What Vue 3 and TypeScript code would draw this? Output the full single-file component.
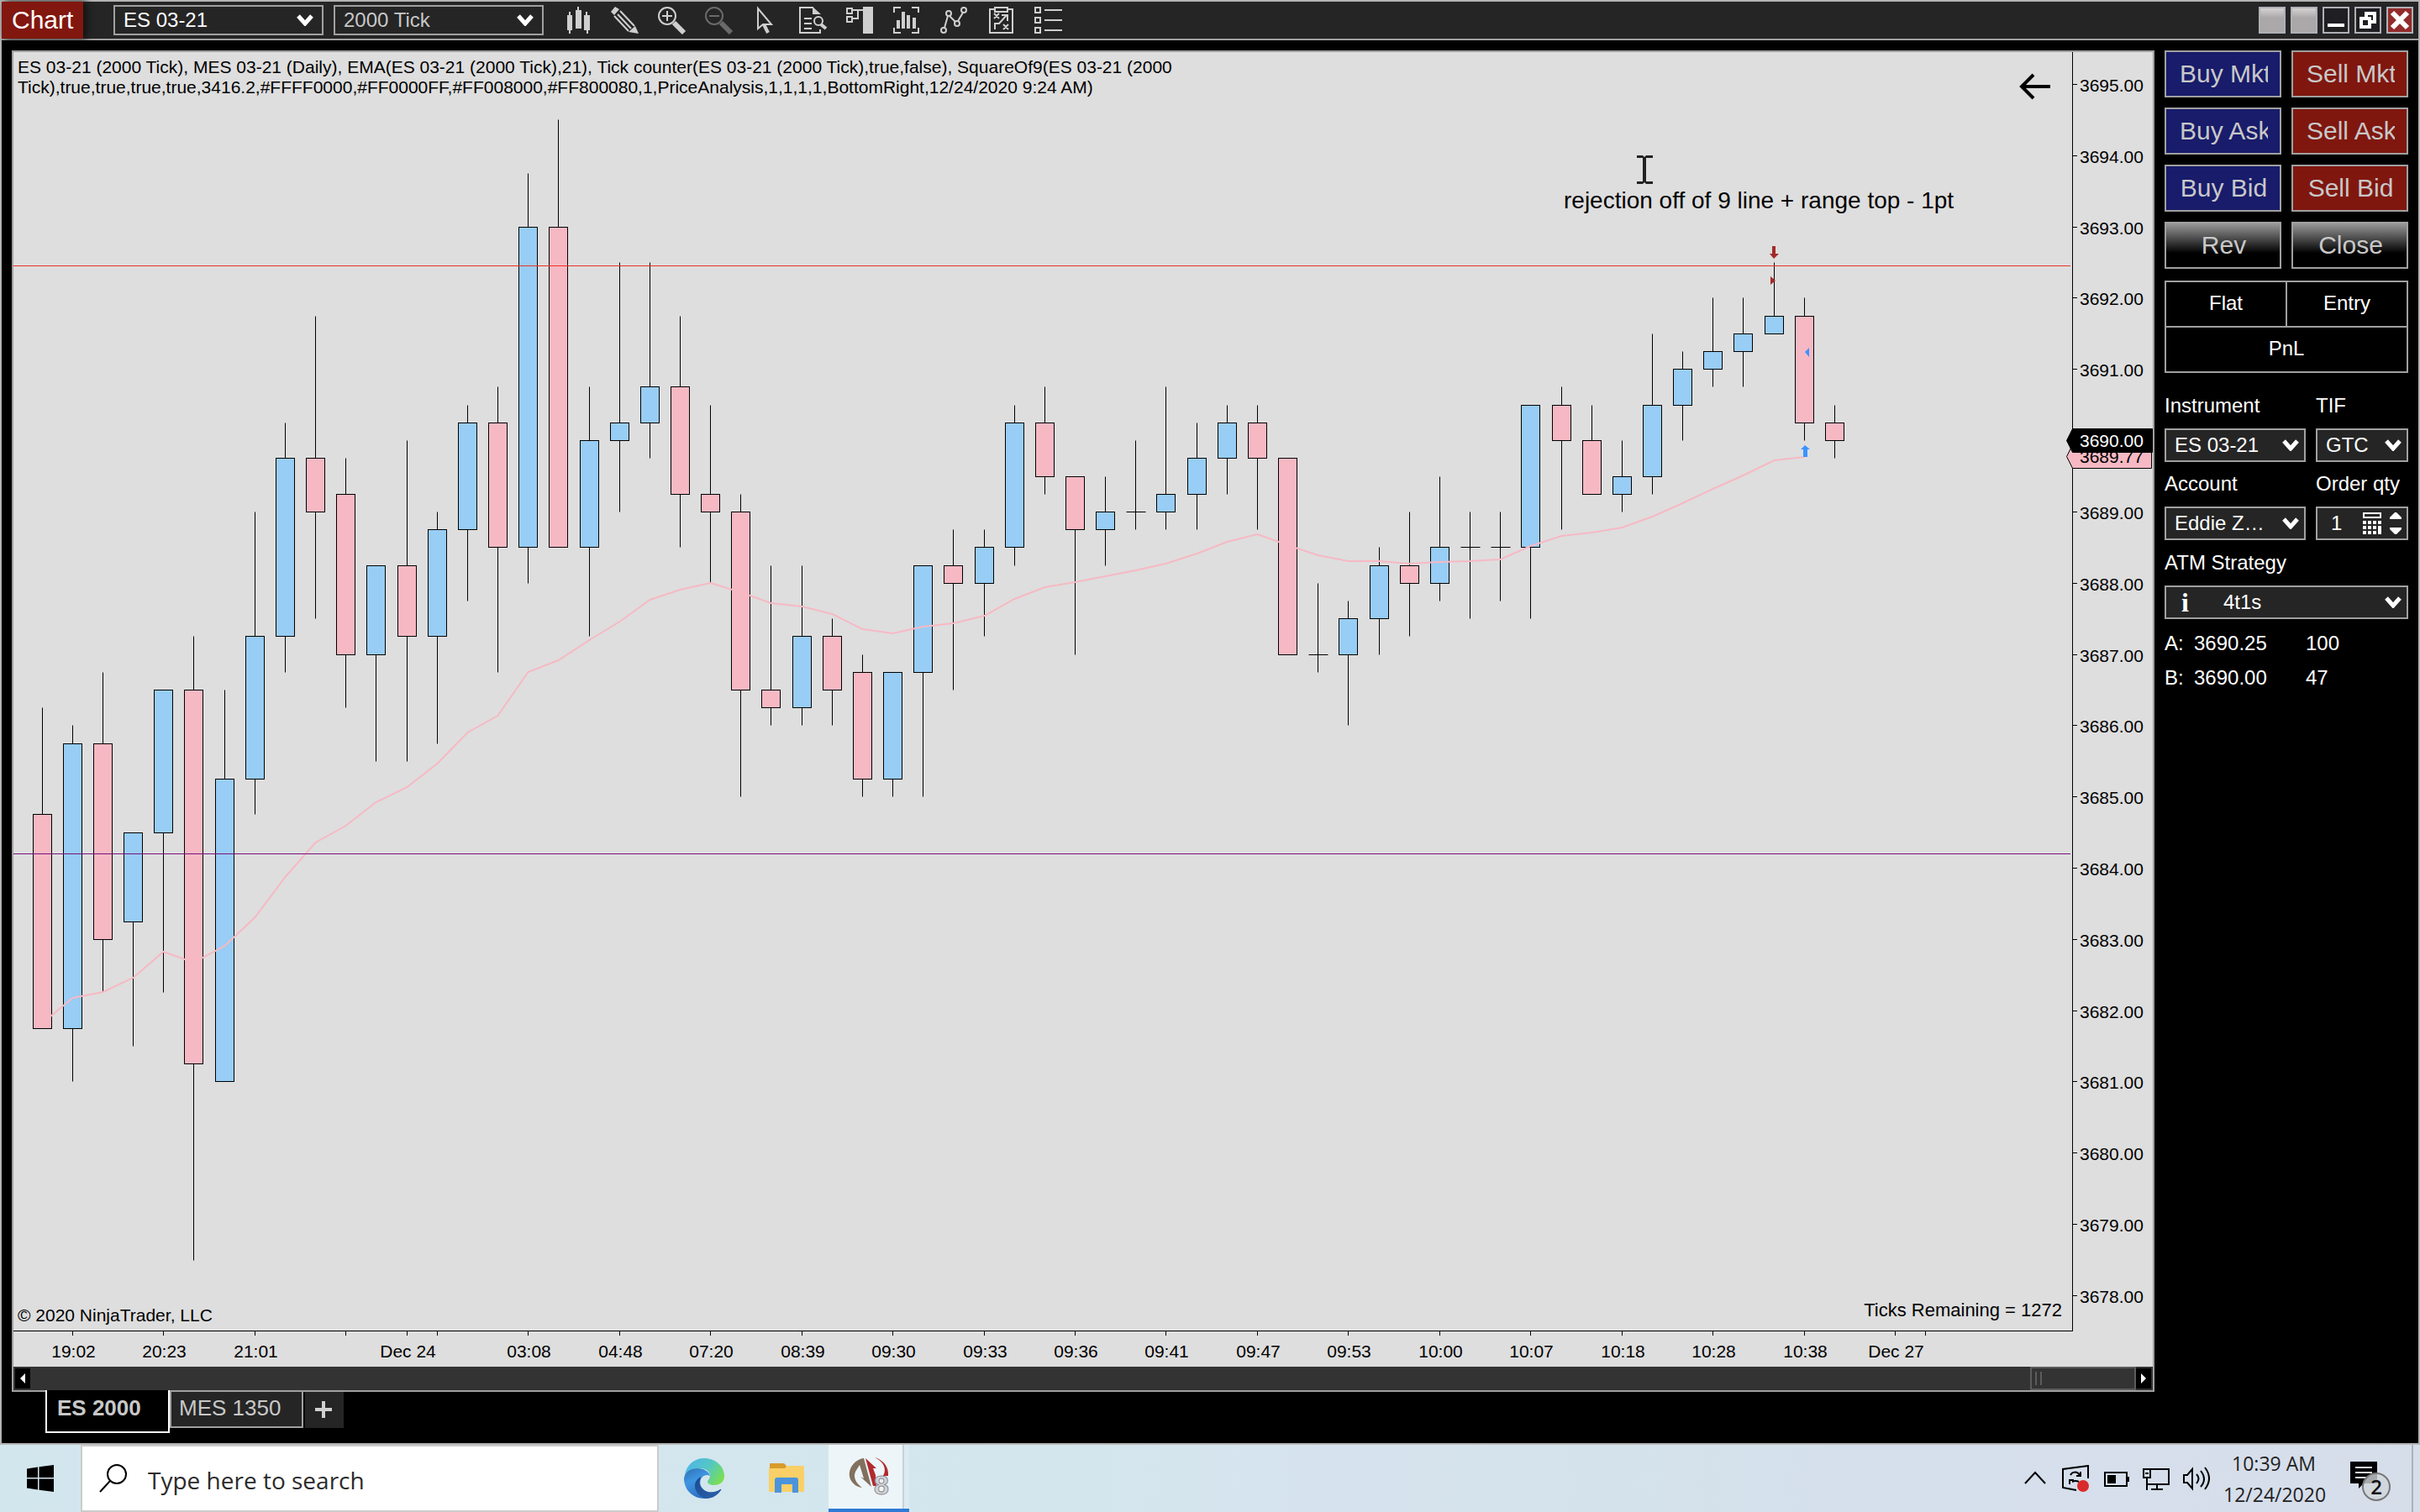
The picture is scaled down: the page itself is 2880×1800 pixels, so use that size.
<script setup lang="ts">
import { ref } from 'vue'

type Candle = [kind: 'up' | 'down' | 'flat', high: number, top: number, bottom: number, low: number]

/* Prices are stored as quarter points below 3695.00, the tick size of the contract. */
const candles: Candle[] = [
  ['down', 35, 41, 53, 53], ['up', 36, 37, 53, 56], ['down', 33, 37, 48, 51], ['up', 42, 42, 47, 54],
  ['up', 34, 34, 42, 51], ['down', 31, 34, 55, 66], ['up', 34, 39, 56, 56], ['up', 24, 31, 39, 41],
  ['up', 19, 21, 31, 33], ['down', 13, 21, 24, 30], ['down', 21, 23, 32, 35], ['up', 27, 27, 32, 38],
  ['down', 20, 27, 31, 38], ['up', 24, 25, 31, 37], ['up', 18, 19, 25, 29], ['down', 17, 19, 26, 33],
  ['up', 5, 8, 26, 28], ['down', 2, 8, 26, 26], ['up', 17, 20, 26, 31], ['up', 10, 19, 20, 24],
  ['up', 10, 17, 19, 21], ['down', 13, 17, 23, 26], ['down', 18, 23, 24, 28], ['down', 23, 24, 34, 40],
  ['down', 27, 34, 35, 36], ['up', 27, 31, 35, 36], ['down', 30, 31, 34, 36], ['down', 32, 33, 39, 40],
  ['up', 33, 33, 39, 40], ['up', 27, 27, 33, 40], ['down', 25, 27, 28, 34], ['up', 25, 26, 28, 31],
  ['up', 18, 19, 26, 27], ['down', 17, 19, 22, 23], ['down', 22, 22, 25, 32], ['up', 22, 24, 25, 27],
  ['flat', 20, 24, 24, 25], ['up', 17, 23, 24, 25], ['up', 19, 21, 23, 25], ['up', 18, 19, 21, 23],
  ['down', 18, 19, 21, 25], ['down', 21, 21, 32, 32], ['flat', 28, 32, 32, 33], ['up', 29, 30, 32, 36],
  ['up', 26, 27, 30, 32], ['down', 24, 27, 28, 31], ['up', 22, 26, 28, 29], ['flat', 24, 26, 26, 30],
  ['flat', 24, 26, 26, 29], ['up', 18, 18, 26, 30], ['down', 17, 18, 20, 25], ['down', 18, 20, 23, 23],
  ['up', 20, 22, 23, 24], ['up', 14, 18, 22, 23], ['up', 15, 16, 18, 20], ['up', 12, 15, 16, 17],
  ['up', 12, 14, 15, 17], ['up', 10, 13, 14, 14], ['down', 12, 13, 19, 20], ['down', 18, 19, 20, 21],
]

const ema = [
  1156, 1126, 1119, 1102, 1071, 1084, 1064, 1030, 982, 941, 921, 893, 875, 847, 810, 790, 738, 724, 700, 678,
  652, 640, 632, 643, 656, 660, 669, 687, 692, 684, 680, 671, 651, 637, 631, 624, 617, 609, 597, 583,
  574, 587, 599, 606, 606, 609, 607, 606, 604, 588, 576, 572, 566, 553, 537, 520, 504, 486, 482,
]

const times: [bar: number, label: string][] = [
  [1, '19:02'], [4, '20:23'], [7, '21:01'], [10, ''], [12, 'Dec 24'], [13, ''], [16, '03:08'], [19, '04:48'],
  [22, '07:20'], [25, '08:39'], [28, '09:30'], [31, '09:33'], [34, '09:36'], [37, '09:41'], [40, '09:47'],
  [43, '09:53'], [46, '10:00'], [49, '10:07'], [52, '10:18'], [55, '10:28'], [58, '10:38'], [61, 'Dec 27'], [62, ''],
]

const prices = Array.from({ length: 18 }, (_, i) => 3695 - i)

const barX = (i: number) => Math.floor(34.2 + i * 36.156) + 0.5
const tickY = (q: number) => Math.floor(38.5 + q * 21.205) + 0.5
const emaPoints = ema.map((y, i) => `${barX(i)},${y}`).join(' ')

const orderButtons = [
  { label: 'Buy Mkt', kind: 'buy' }, { label: 'Sell Mkt', kind: 'sell' },
  { label: 'Buy Ask', kind: 'buy' }, { label: 'Sell Ask', kind: 'sell' },
  { label: 'Buy Bid', kind: 'buy' }, { label: 'Sell Bid', kind: 'sell' },
  { label: 'Rev', kind: 'plain' }, { label: 'Close', kind: 'plain' },
]

const quantity = ref('1')
const query = ref('')
</script>

<template>
  <div class="desktop">
    <main class="window">
      <header class="titlebar">
        <h1 class="title">Chart</h1>
        <div class="pickers">
          <div class="picker">
            <select aria-label="Chart instrument"><option>ES 03-21</option></select>
            <svg class="chevron" viewBox="0 0 20 14"><path d="M2 2 L10 11 L18 2" /></svg>
          </div>
          <div class="picker dim">
            <select aria-label="Interval"><option>2000 Tick</option></select>
            <svg class="chevron" viewBox="0 0 20 14"><path d="M2 2 L10 11 L18 2" /></svg>
          </div>
        </div>
        <nav class="tools" aria-label="Chart tools">
          <button aria-label="Bar style"><svg viewBox="0 0 34 34"><path class="solid" d="M4 11h2v-4h2v4h2v18h-2v4h-2v-4h-2zM14 5h2v-4h2v4h3v22h-7zM24 11h2v-4h2v4h3v18h-2v4h-2v-4h-3z" /></svg></button>
          <button aria-label="Drawing tools"><svg viewBox="0 0 34 34"><path class="solid" d="M0 7l5-6 5 3-6 7zM21 31l8-7 4 9z" /><path d="M4 12l17 18M8 10l16 17M11 6l17 18" /></svg></button>
          <button aria-label="Zoom in"><svg viewBox="0 0 34 34"><circle cx="11" cy="12" r="10" /><path d="M11 6v12M5 12h12" /><path class="thick" d="M19 20l12 12" /></svg></button>
          <button aria-label="Zoom out" disabled><svg viewBox="0 0 34 34"><circle cx="11" cy="12" r="10" /><path d="M5 12h12" /><path class="thick" d="M19 20l12 12" /></svg></button>
          <button aria-label="Cursor"><svg viewBox="0 0 34 34"><path d="M7 3v24l6-5h10z" /><path class="mid" d="M14 22l5 10" /></svg></button>
          <button aria-label="Data series"><svg viewBox="0 0 34 34"><path d="M17 2H1v30h24v-4M6 15h9M6 21h9M6 27h9" /><path class="solid" d="M16 1l10 9H16z" /><circle cx="23" cy="18" r="5" /><path class="mid" d="M26 22l6 5" /></svg></button>
          <button aria-label="Chart trader"><svg viewBox="0 0 34 34"><path class="solid" d="M20 1h12v32H20z" /><path d="M1 3h6v6H1zM1 13h6v6H1zM7 5h14M7 15h7V5" /></svg></button>
          <button aria-label="Indicators"><svg viewBox="0 0 34 34"><path d="M9 2H1v6M22 2h8v6M9 32H1v-6M22 32h8v-6" /><path class="mid" d="M6 27V17M12 27V7M18 27v-16M25 27V14" /></svg></button>
          <button aria-label="Strategies"><svg viewBox="0 0 34 34"><circle cx="4" cy="29" r="3" /><circle cx="10" cy="9" r="3" /><circle cx="20" cy="21" r="3" /><circle cx="28" cy="5" r="3" /><path d="M5 26l4-14M11 12l7 7M21 18l6-10" /></svg></button>
          <button aria-label="Strategy analyzer"><svg viewBox="0 0 34 34"><path d="M9 4H3v28h27V4h-6M9 2h15v5H9zM8 9l6 6M14 9l-6 6M19 22l6 6M25 22l-6 6M9 28v-7h5l9-10M17 11h7v7" /></svg></button>
          <button aria-label="Properties"><svg viewBox="0 0 34 34"><path d="M1 2h6v6H1zM1 14h6v6H1zM1 26h6v6H1zM12 5h21M12 17h21M12 29h21" /></svg></button>
        </nav>
        <div class="window-buttons">
          <button class="blank" aria-label="Link instrument"></button>
          <button class="blank" aria-label="Link interval"></button>
          <button aria-label="Minimize"><svg viewBox="0 0 28 28"><path d="M4 20h20" /></svg></button>
          <button aria-label="Restore"><svg viewBox="0 0 28 28"><path d="M6 12h10v10H6zM12 12V6h10v10h-6" /></svg></button>
          <button class="close" aria-label="Close window"><svg viewBox="0 0 28 28"><path d="M5 5l18 18M23 5L5 23" /></svg></button>
        </div>
      </header>

      <div class="workspace">
        <section class="chart-column">
          <div class="chart-frame">
            <div class="chart">
              <svg class="plot" viewBox="0 0 2546 1565">
                <g v-for="([kind, high, top, bottom, low], i) in candles" :key="i" :class="['candle', kind]">
                  <line :x1="barX(i)" :x2="barX(i)" :y1="tickY(high)" :y2="tickY(low)" />
                  <rect v-if="kind !== 'flat'" :x="barX(i) - 11" :y="tickY(top)" width="22" :height="tickY(bottom) - tickY(top)" />
                  <line v-else :x1="barX(i) - 11" :x2="barX(i) + 12" :y1="tickY(top)" :y2="tickY(top)" />
                </g>
                <polyline class="ema" :points="emaPoints" />
                <line class="resistance" x1="0" x2="2448" y1="254.5" y2="254.5" />
                <line class="support" x1="0" x2="2448" y1="954.5" y2="954.5" />

                <path class="sell-mark" d="M2093 231h4v9h4l-6 6l-5-6h3zM2091 267l6 5l-6 5z" />
                <path class="buy-mark" d="M2137 352l-5 5l5 6zM2132 468l6 5h-3v9h-5v-9h-3z" />
                <text class="note" x="1845" y="186">rejection off of 9 line + range top - 1pt</text>
                <path class="ibeam" d="M1932 123h7l2 2l2-2h8v3h-8v28h8v3h-8l-2-2l-2 2h-7v-3h7v-28h-7z" />
                <path class="back-arrow" d="M2424 41h-34M2404 27l-14 14l14 14" />

                <path class="axis" d="M2450.5 0V1522M0 1522.5H2451" />
                <g v-for="(price, i) in prices" :key="price">
                  <line class="axis" x1="2451" x2="2456" :y1="tickY(i * 4)" :y2="tickY(i * 4)" />
                  <text class="label" x="2459" :y="tickY(i * 4) + 8">{{ price.toFixed(2) }}</text>
                </g>
                <g v-for="[bar, label] in times" :key="bar">
                  <line class="axis" :x1="barX(bar)" :x2="barX(bar)" y1="1523" y2="1528" />
                  <text v-if="label" class="label time" :x="barX(bar) + 1" y="1554">{{ label }}</text>
                </g>

                <path class="tag ema-tag" d="M2443.5 481.5l7-14H2544.5v28H2450.5z" />
                <text class="label" x="2459" y="489">3689.77</text>
                <path class="tag last-tag" d="M2443.5 462.5l7-14H2545.5v28H2450.5z" />
                <text class="label inverse" x="2459" y="470">3690.00</text>
              </svg>
              <p class="series">ES 03-21 (2000 Tick), MES 03-21 (Daily), EMA(ES 03-21 (2000 Tick),21), Tick counter(ES 03-21 (2000 Tick),true,false), SquareOf9(ES 03-21 (2000<br>Tick),true,true,true,true,3416.2,#FFFF0000,#FF0000FF,#FF008000,#FF800080,1,PriceAnalysis,1,1,1,1,BottomRight,12/24/2020 9:24 AM)</p>
              <p class="copyright">© 2020 NinjaTrader, LLC</p>
              <p class="remaining">Ticks Remaining = 1272</p>
            </div>
            <div class="scrollbar">
              <button class="scroll-end" aria-label="Scroll left"><svg viewBox="0 0 8 12"><path d="M7 0v12L1 6z" /></svg></button>
              <div class="scroll-thumb"><i></i><i></i></div>
              <button class="scroll-end" aria-label="Scroll right"><svg viewBox="0 0 8 12"><path d="M1 0v12l6-6z" /></svg></button>
            </div>
          </div>
          <nav class="tabs" aria-label="Chart tabs">
            <button class="tab active">ES 2000</button>
            <button class="tab">MES 1350</button>
            <button class="tab add" aria-label="Add tab"><svg viewBox="0 0 20 20"><path d="M10 0v20M0 10h20" /></svg></button>
          </nav>
        </section>

        <aside class="trader">
          <div class="orders">
            <button v-for="b in orderButtons" :key="b.label" :class="['order', b.kind]"><span>{{ b.label }}</span></button>
          </div>
          <div class="status">
            <span>Flat</span><span>Entry</span><span class="wide">PnL</span>
          </div>
          <div class="fields">
            <div class="field">
              <label for="instrument">Instrument</label>
              <div class="picker">
                <select id="instrument"><option>ES 03-21</option></select>
                <svg class="chevron" viewBox="0 0 20 14"><path d="M2 2 L10 11 L18 2" /></svg>
              </div>
            </div>
            <div class="field">
              <label for="tif">TIF</label>
              <div class="picker">
                <select id="tif"><option>GTC</option></select>
                <svg class="chevron" viewBox="0 0 20 14"><path d="M2 2 L10 11 L18 2" /></svg>
              </div>
            </div>
            <div class="field">
              <label for="account">Account</label>
              <div class="picker">
                <select id="account"><option>Eddie Z…</option></select>
                <svg class="chevron" viewBox="0 0 20 14"><path d="M2 2 L10 11 L18 2" /></svg>
              </div>
            </div>
            <div class="field">
              <label for="qty">Order qty</label>
              <div class="quantity">
                <input id="qty" v-model="quantity" type="text">
                <svg class="calc" viewBox="0 0 22 26"><path class="screen" d="M1 1h20v5H1z" /><path d="M0 10h4v4H0zM6 10h4v4H6zM12 10h4v4h-4zM18 10h4v4h-4zM0 16h4v4H0zM6 16h4v4H6zM12 16h4v4h-4zM18 16h4v10h-4zM0 22h4v4H0zM6 22h4v4H6zM12 22h4v4h-4z" /></svg>
                <div class="spinner">
                  <button aria-label="Increase"><svg viewBox="0 0 14 8"><path d="M0 8V6l6-6h2l6 6v2z" /></svg></button>
                  <button aria-label="Decrease"><svg viewBox="0 0 14 8"><path d="M0 0v2l6 6h2l6-6V0z" /></svg></button>
                </div>
              </div>
            </div>
            <div class="field full">
              <label for="atm">ATM Strategy</label>
              <div class="picker info">
                <span class="info-mark">i</span>
                <select id="atm"><option>4t1s</option></select>
                <svg class="chevron" viewBox="0 0 20 14"><path d="M2 2 L10 11 L18 2" /></svg>
              </div>
            </div>
          </div>
          <table class="quotes">
            <tbody>
              <tr><th scope="row">A:</th><td>3690.25</td><td>100</td></tr>
              <tr><th scope="row">B:</th><td>3690.00</td><td>47</td></tr>
            </tbody>
          </table>
        </aside>
      </div>
    </main>

    <footer class="taskbar">
      <button class="start" aria-label="Start"><svg viewBox="0 0 32 32"><path d="M0 4.5l13-2V15H0zM14.5 2.3L32 0v15H14.5zM0 16.5h13V29.5l-13-2zM14.5 16.5H32V32l-17.5-2.3z" /></svg></button>
      <label class="search">
        <svg viewBox="0 0 34 34"><circle cx="21" cy="12" r="11" /><path d="M13 20L1 33" /></svg>
        <input v-model="query" type="text" placeholder="Type here to search" aria-label="Type here to search">
      </label>
      <div class="apps">
        <button class="app" aria-label="Edge">
          <svg width="48" height="48" viewBox="0 0 48 48">
            <defs>
              <linearGradient id="wave" x1="0" y1="0.2" x2="1" y2="0.7"><stop offset="0" stop-color="#4fb4ec" /><stop offset="0.55" stop-color="#54c8c0" /><stop offset="1" stop-color="#7be04f" /></linearGradient>
              <linearGradient id="body" x1="0" y1="0" x2="0.6" y2="1"><stop offset="0" stop-color="#2b6fb5" /><stop offset="0.4" stop-color="#3f96e0" /><stop offset="1" stop-color="#2468bd" /></linearGradient>
              <linearGradient id="deep" x1="0" y1="0" x2="1" y2="1"><stop offset="0" stop-color="#1c4a92" /><stop offset="1" stop-color="#2c62ab" /></linearGradient>
            </defs>
            <path fill="url(#wave)" d="M1 20C3 8 12 0 24 0C38 0 48 10 48 21C48 28 43 32 36 32C31 32 28 30 28 28C28 26 31 25 31 20C30 14 24 12 18 12C9 12 3 16 1 20z" />
            <path fill="url(#body)" d="M0 24C1 16 8 12 16 12C24 12 30 16 31 21C28 19 24 20 21 23C18 28 19 34 24 38C30 42 38 41 44 37C40 44 33 48 24 48C11 48 0 38 0 24z" />
            <path fill="url(#deep)" d="M21 22C17 28 18 34 24 38C30 42 38 41 43 37Q45 36 44 38C40 44 34 48 26 48C18 46 13 39 13 33C13 27 17 23 21 22z" />
          </svg>
        </button>
        <button class="app" aria-label="File Explorer">
          <svg width="42" height="36" viewBox="0 0 42 36">
            <path fill="#d99b2c" d="M1 1q0-1 1-1h15q2 0 3 2l2 4H1z" />
            <path fill="#f9d067" d="M0 6h19l3-3h19q1 0 1 1v29q0 1-1 1H1q-1 0-1-1z" />
            <path fill="#4b94dc" d="M7 35V20q0-3 3-3h22q3 0 3 3v15h-7V25H15v10z" />
          </svg>
        </button>
        <button class="app running" aria-label="NinjaTrader 8">
          <svg width="48" height="46" viewBox="0 0 48 46">
            <path fill="#82705e" d="M17 1C4 4-2 17 2 26C5 32 10 35 16 36C9 31 5 24 8 17L13 9L18 25L14 23L27 35L18 1z" />
            <path fill="#b22a2c" d="M20 1L33 13L29 13L32 21L33 34L29 34z" />
            <path fill="#b22a2c" d="M31 0C41 3 48 11 47 22L41 22C46 13 41 5 31 0z" />
            <text class="eight" x="30" y="44">8</text>
          </svg>
        </button>
      </div>
      <div class="tray">
        <svg class="tray-icon" viewBox="0 0 32 32"><path d="M4 22l12-13l12 13" /></svg>
        <svg class="tray-icon" viewBox="0 0 32 32"><path d="M31 16V1L1 5v22l16 3M10 12c2-4 8-5 11 0M22 8v5h-5M20 20c-4-2-6-1-8 0M9 23v-5h5" /><circle cx="25" cy="25" r="7" class="alert" /></svg>
        <svg class="tray-icon" viewBox="0 0 32 32"><path d="M3 9h26v16H3zM31 14v6" /><path class="fill" d="M6 12h10v10H6z" /></svg>
        <svg class="tray-icon" viewBox="0 0 32 32"><path d="M10 5h21v18H5V15M1 5h8v10H1zM5 23v7M17 23v6M10 29h14M3 10h4" /></svg>
        <svg class="tray-icon" viewBox="0 0 32 32"><path d="M1 12h4l6-7v23l-6-7H1zM16 11q5 5 0 11M21 7q8 10 0 19M26 3q10 13 0 26" /></svg>
        <time class="clock"><span>10:39 AM</span><span>12/24/2020</span></time>
        <button class="notices" aria-label="2 notifications">
          <svg viewBox="0 0 48 48"><path d="M0 1h32v26H16l-6 6v-6H0z" /><path class="rows" d="M6 8h20M6 14h20M6 20h14" /></svg>
          <span class="badge">2</span>
        </button>
        <button class="show-desktop" aria-label="Show desktop"></button>
      </div>
    </footer>
  </div>
</template>

<style>
body {
  background: #000;
}
</style>

<style scoped>
* {
  box-sizing: border-box;
}

.desktop {
  display: flex;
  flex-direction: column;
  min-height: 100vh;
  font-family: "Liberation Sans", Arial, sans-serif;
  font-size: 24px;
  line-height: 28px;
  color: #fff;
}

button,
select,
input {
  margin: 0;
  padding: 0;
  border: 0;
  border-radius: 0;
  background: none;
  color: inherit;
  font: inherit;
}

svg {
  display: block;
  flex: none;
}

p,
h1 {
  margin: 0;
}

.window {
  display: flex;
  flex: 1;
  flex-direction: column;
  border: 2px solid #b4b4b4;
  background: #000;
}

/* Title bar */
.titlebar {
  display: flex;
  align-items: center;
  height: 46px;
  border-bottom: 2px solid #a0a0a0;
  background: #252525;
}

.title {
  width: 97px;
  padding-left: 12px;
  background: #82170f;
  box-shadow: 4px 0 8px #111;
  font-size: 30px;
  font-weight: 400;
  line-height: 44px;
}

.pickers {
  display: flex;
  gap: 12px;
  margin-left: 36px;
}

.pickers .picker {
  width: 250px;
  height: 36px;
}

.pickers .chevron {
  right: 10px;
}

.picker {
  position: relative;
  display: flex;
  align-items: center;
  height: 40px;
  border: 2px solid #a0a0a0;
  background: #252525;
}

.picker select {
  flex: 1;
  width: 100%;
  height: 100%;
  padding-left: 10px;
  appearance: none;
}

.dim select {
  color: #c8c8c8;
}

.chevron {
  position: absolute;
  right: 6px;
  width: 20px;
  height: 14px;
  fill: none;
  stroke: #fff;
  stroke-width: 5;
  pointer-events: none;
}

.tools {
  display: flex;
  gap: 22px;
  margin-left: 24px;
}

.tools svg {
  width: 34px;
  height: 34px;
  fill: none;
  stroke: #cfcfcf;
  stroke-width: 2;
}

.tools .solid {
  fill: #cfcfcf;
  stroke: none;
}

.tools .mid {
  stroke-width: 4;
}

.tools .thick {
  stroke-width: 6;
}

.tools button:disabled svg {
  stroke: #6a6a6a;
}

.window-buttons {
  display: flex;
  gap: 6px;
  margin-left: auto;
  padding-right: 6px;
}

.window-buttons button {
  width: 32px;
  height: 32px;
  border: 2px solid #aeb0b8;
  background: #1f1f22;
}

.window-buttons .blank {
  background: linear-gradient(#d4d2d2, #aaa8a8 40%);
}

.window-buttons .close {
  background: #932b2b;
}

.window-buttons svg {
  width: 28px;
  height: 28px;
  fill: none;
  stroke: #fff;
  stroke-width: 4;
}

.window-buttons .close svg {
  stroke-width: 6;
}

/* Chart */
.workspace {
  display: flex;
  flex: 1;
  gap: 12px;
  padding: 12px;
}

.chart-column {
  display: flex;
  flex: 1;
  flex-direction: column;
  min-width: 0;
}

.chart-frame {
  display: flex;
  flex: 1;
  flex-direction: column;
  border: 2px solid #a0a0a0;
}

.chart {
  position: relative;
  flex: 1;
  background: #dedede;
  color: #000;
  font-size: 21px;
  line-height: 24px;
}

.plot {
  width: 100%;
  height: auto;
}

.candle line,
.candle rect {
  stroke: #000;
  stroke-width: 1;
}

.up rect {
  fill: #98cdf5;
}

.down rect {
  fill: #f6b9c4;
}

.ema {
  fill: none;
  stroke: #f6b9c4;
  stroke-width: 2;
}

.resistance {
  stroke: #f03020;
}

.support {
  stroke: #7a1080;
}

.axis {
  fill: none;
  stroke: #000;
}

.label {
  fill: #000;
  font-size: 21px;
}

.label.inverse {
  fill: #fff;
}

.time {
  text-anchor: middle;
}

.note {
  font-size: 28px;
}

.sell-mark {
  fill: #a52a2a;
}

.buy-mark {
  fill: #3b93ff;
}

.ibeam {
  fill: #222;
}

.back-arrow {
  fill: none;
  stroke: #000;
  stroke-width: 4;
}

.tag {
  stroke: #000;
}

.ema-tag {
  fill: #f6b9c4;
}

.series {
  position: absolute;
  top: 6px;
  left: 5px;
  white-space: nowrap;
}

.copyright {
  position: absolute;
  bottom: 49px;
  left: 5px;
}

.remaining {
  position: absolute;
  right: 108px;
  bottom: 55px;
  font-size: 22px;
}

.scrollbar {
  display: flex;
  align-items: center;
  height: 28px;
  padding: 0 2px;
  background: #333;
}

.scroll-end {
  display: flex;
  align-items: center;
  justify-content: center;
  width: 18px;
  height: 24px;
  background: #000;
}

.scroll-end svg {
  width: 8px;
  height: 12px;
  fill: #fff;
}

.scroll-thumb {
  display: flex;
  gap: 4px;
  width: 126px;
  height: 28px;
  margin-left: auto;
  padding: 4px;
  border: 2px solid #5c5c5c;
}

.scroll-thumb i {
  width: 2px;
  height: 16px;
  background: #5c5c5c;
}

.tabs {
  display: flex;
  align-items: flex-start;
  height: 49px;
  padding-left: 40px;
  color: #c8c8c8;
  font-size: 26px;
  line-height: 28px;
}

.tab {
  width: 159px;
  height: 43px;
  padding: 0 0 4px 9px;
  border: solid #a0a0a0;
  border-width: 0 2px 2px;
  background: #252525;
  text-align: left;
}

.tab.active {
  position: relative;
  width: 148px;
  height: 51px;
  margin-top: -2px;
  padding: 0 0 8px 12px;
  border-color: #fff;
  background: #000;
  font-weight: 700;
}

.tab.add {
  width: 46px;
  margin-left: 2px;
  padding: 0 0 2px 12px;
  border: 0;
}

.add svg {
  width: 20px;
  height: 20px;
  fill: none;
  stroke: #d0d0d0;
  stroke-width: 4;
}

/* Order entry */
.trader {
  width: 290px;
}

.orders {
  display: grid;
  grid-template-columns: 1fr 1fr;
  gap: 12px;
}

.order {
  height: 56px;
  padding: 0 14px 0 16px;
  overflow: hidden;
  border: 2px solid #a0a0a0;
  color: #c8c8c8;
  font-size: 30px;
}

.order span {
  display: block;
  overflow: hidden;
  line-height: 36px;
  white-space: nowrap;
}

.buy {
  background: #181c6b;
}

.sell {
  background: #80170f;
}

.plain {
  background: linear-gradient(#999, #000 68%);
}

.status {
  display: grid;
  grid-template-columns: 1fr 1fr;
  gap: 2px;
  margin-top: 14px;
  border: 2px solid #a0a0a0;
  background: #a0a0a0;
  line-height: 50px;
  text-align: center;
}

.status span {
  padding-bottom: 2px;
  background: #000;
}

.status .wide {
  grid-column: span 2;
}

.fields {
  display: grid;
  grid-template-columns: 168px 1fr;
  gap: 12px;
  margin-top: 25px;
}

.field {
  display: flex;
  flex-direction: column;
  gap: 13px;
}

.full {
  grid-column: span 2;
  margin-top: 1px;
}

.info {
  padding-left: 18px;
}

.info-mark {
  width: 8px;
  margin-right: 32px;
  font-family: "Liberation Serif", serif;
  font-size: 32px;
  font-weight: 700;
}

.quantity {
  display: flex;
  align-items: center;
  gap: 10px;
  height: 40px;
  padding: 0 6px 0 16px;
  border: 2px solid #a0a0a0;
  background: #252525;
}

.quantity input {
  flex: 1;
  width: 20px;
  min-width: 0;
}

.calc {
  width: 22px;
  height: 26px;
  fill: #fff;
}

.calc .screen {
  fill: none;
  stroke: #fff;
  stroke-width: 2;
}

.spinner {
  display: flex;
  flex-direction: column;
  gap: 10px;
}

.spinner svg {
  width: 14px;
  height: 8px;
  fill: #fff;
}

.quotes {
  margin-top: 15px;
  border-spacing: 0;
  table-layout: fixed;
  width: 100%;
}

.quotes th,
.quotes td {
  padding: 0 0 13px;
  font-weight: 400;
  text-align: left;
}

.quotes th {
  width: 35px;
}

.quotes td:nth-child(2) {
  width: 133px;
}

/* Taskbar */
.taskbar {
  display: flex;
  align-items: center;
  height: 80px;
  background: linear-gradient(90deg, #d2e6ee, #d4e6ed 45%, #d6e3ee 55%, #d4e3eb 66%, #d6dfec 80%, #d6deea);
  color: #222;
  font-family: "Open Sans", "Noto Sans", sans-serif;
}

.start {
  width: 96px;
}

.start svg {
  width: 32px;
  height: 32px;
  margin: 0 auto;
}

.search {
  display: flex;
  align-items: center;
  gap: 24px;
  width: 688px;
  height: 80px;
  padding-left: 20px;
  border: 2px solid #ccc;
  background: #fff;
}

.search svg {
  width: 34px;
  height: 34px;
  fill: none;
  stroke: #000;
  stroke-width: 2;
}

.search input {
  flex: 1;
  padding-top: 4px;
  font-size: 28px;
}

.search input::placeholder {
  color: #2b2b2b;
  opacity: 1;
}

.apps {
  display: flex;
  gap: 2px;
  margin-left: 6px;
}

.app {
  display: flex;
  align-items: center;
  justify-content: center;
  width: 96px;
  height: 80px;
}

.running {
  border-bottom: 4px solid #2f7ad6;
  background: linear-gradient(90deg, #edf5f8 88px, #c2d3da 88px, #c2d3da 90px, #dcebf1 90px);
}

.eight {
  fill: #d4d4d8;
  stroke: #8a8a90;
  stroke-width: 1;
  font-family: "Liberation Sans", sans-serif;
  font-size: 32px;
  font-weight: 700;
}

.tray {
  display: flex;
  align-items: center;
  gap: 16px;
  margin-left: auto;
}

.tray-icon {
  width: 32px;
  height: 32px;
  fill: none;
  stroke: #000;
  stroke-width: 2;
}

.tray-icon .fill {
  fill: #000;
  stroke: none;
}

.tray-icon .alert {
  fill: #d92b2b;
  stroke: none;
}

.clock {
  display: flex;
  flex-direction: column;
  width: 120px;
  padding-top: 2px;
  font-size: 23px;
  line-height: 37px;
  text-align: center;
  white-space: nowrap;
}

.notices {
  position: relative;
  width: 48px;
  height: 48px;
  margin: 6px 9px 0 15px;
}

.notices svg {
  width: 48px;
  height: 48px;
}

.notices .rows {
  stroke: #d6deea;
  stroke-width: 2;
}

.badge {
  position: absolute;
  right: 0;
  bottom: 0;
  width: 34px;
  height: 34px;
  border: 2px solid #777;
  border-radius: 50%;
  background: #d0d4dacc;
  color: #111;
  font-size: 24px;
  font-weight: 600;
  line-height: 30px;
}

.show-desktop {
  width: 10px;
  height: 80px;
  border-left: 2px solid #aab2bf;
}
</style>
